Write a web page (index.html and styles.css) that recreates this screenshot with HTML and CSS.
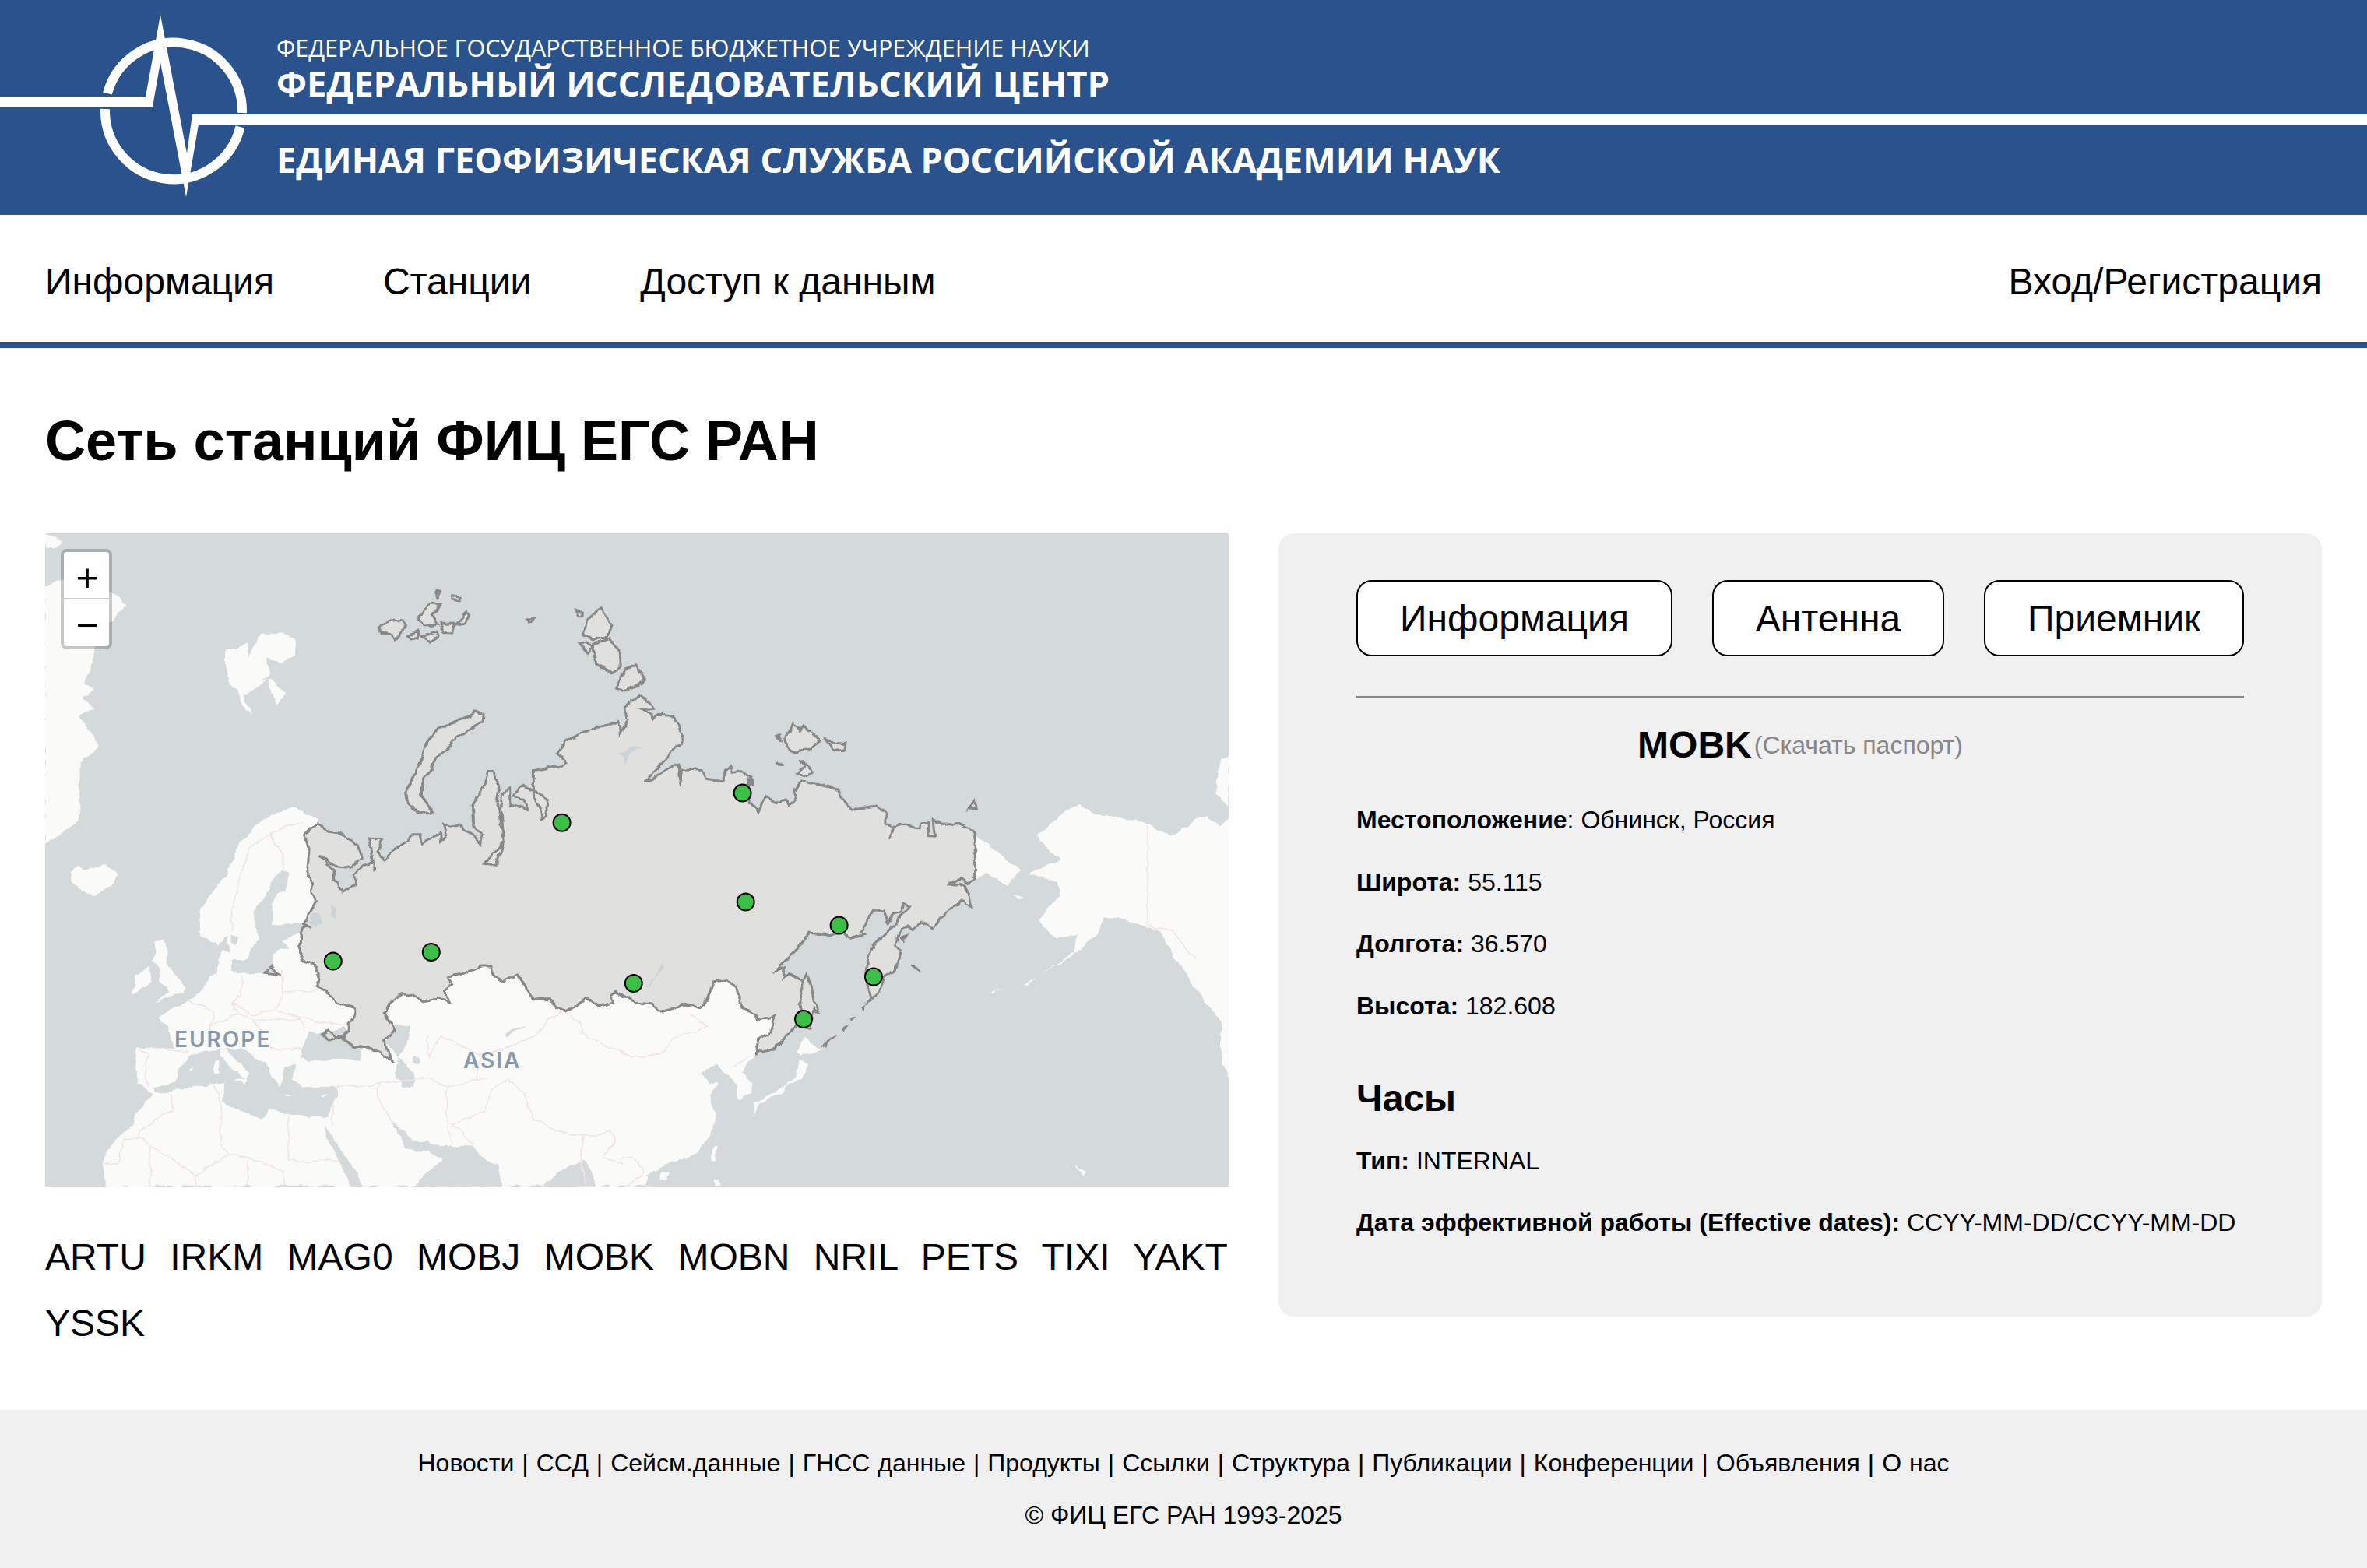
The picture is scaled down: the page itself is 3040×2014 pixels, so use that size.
FILE: index.html
```html
<!DOCTYPE html>
<html lang="ru">
<head>
    <meta charset="UTF-8">
    <meta name="viewport" content="width=device-width, initial-scale=1.0">
    <title>Сеть станций ФИЦ ЕГС РАН</title>
    <link rel="stylesheet" href="styles.css">
</head>
<body>
    <header class="banner">
        <svg class="banner-logo" width="3040" height="276" viewBox="0 0 3040 276">
            <path class="ring" d="M138 120A88 88 0 0 1 311 145"/>
            <path class="ring" d="M308.5 163A88 88 0 0 1 135 140"/>
            <polygon class="pulse" points="0,124 187,124 206,19 240,197 247,147 3040,147 3040,160 255,160 239,253 206,80 196,137 0,137"/>
        </svg>
        <div class="banner-top">
            <div class="banner-line1">ФЕДЕРАЛЬНОЕ ГОСУДАРСТВЕННОЕ БЮДЖЕТНОЕ УЧРЕЖДЕНИЕ НАУКИ</div>
            <div class="banner-line2">ФЕДЕРАЛЬНЫЙ ИССЛЕДОВАТЕЛЬСКИЙ ЦЕНТР</div>
        </div>
        <div class="banner-line3">ЕДИНАЯ ГЕОФИЗИЧЕСКАЯ СЛУЖБА РОССИЙСКОЙ АКАДЕМИИ НАУК</div>
    </header>

    <nav class="menubar">
        <div class="menu">
            <a class="menu-link">Информация</a>
            <a class="menu-link">Станции</a>
            <a class="menu-link">Доступ к данным</a>
        </div>
        <a class="menu-link">Вход/Регистрация</a>
    </nav>

    <main class="content">
        <h1 class="page-title">Сеть станций ФИЦ ЕГС РАН</h1>
        <div class="columns">
            <div class="left-col">
                <div class="map">
                    <svg class="map-svg" width="1520" height="839" viewBox="0 0 1520 839">
                        <defs>
                            <filter id="coast" filterUnits="userSpaceOnUse" x="0" y="0" width="1520" height="839">
                                <feTurbulence type="fractalNoise" baseFrequency="0.07" numOctaves="3" seed="4"/>
                                <feDisplacementMap in="SourceGraphic" scale="7" xChannelSelector="R" yChannelSelector="G"/>
                            </filter>
                        </defs>
                        <rect class="ocean" width="1520" height="839"/>
                        <g filter="url(#coast)">
                        <g transform="translate(-18,-15) scale(.5102,.3571)">
                            <!-- land -->
                            <polygon class="land" points="188,2391 180,2309 210,2224 258,2169 265,2124 305,2054 268,2019 262,1974 268,1892 360,1896 352,1860 345,1815 318,1779 385,1734 440,1674 450,1634 470,1624 480,1534 505,1554 500,1614 530,1629 585,1619 610,1604 607,1554 625,1534 650,1534 632,1509 675,1479 800,1500 1800,1600 1910,1750 1870,1899 1825,1914 1790,1974 1812,2024 1812,2059 1780,2079 1775,2024 1762,2004 1725,1949 1685,1989 1705,2024 1735,2019 1705,2064 1725,2134 1710,2204 1670,2279 1600,2314 1550,2354 1565,2391"/>
                            <polygon class="land" points="720,1070 660,1025 615,1050 580,1075 525,1160 490,1275 425,1390 425,1490 470,1525 495,1494 505,1574 545,1574 570,1494 560,1404 600,1324 640,1254 650,1264 605,1374 610,1454 680,1444 712,1400 712,1300 700,1130 720,1088"/>
                            <polygon class="land" points="35,42 60,55 80,75 60,95 35,95"/>
                            <polygon class="land" points="35,235 80,205 190,250 240,295 215,340 195,370 160,450 155,510 135,580 160,600 130,640 160,670 120,700 155,770 170,810 125,870 120,960 125,1020 118,1075 80,1120 35,1155"/>
                            <polygon class="land" points="488,460 520,455 545,435 550,490 575,405 625,400 670,425 665,480 630,510 590,490 605,550 580,570 600,565 640,620 620,660 600,610 595,565 555,610 530,620 558,705 530,660 520,610 500,580 488,520"/>
                            <polygon class="land" points="100,1260 120,1235 135,1250 190,1235 215,1270 210,1300 160,1345 120,1320 100,1290"/>
                            <polygon class="land" points="310,1510 335,1505 345,1535 340,1590 385,1670 385,1695 345,1712 308,1735 350,1690 320,1650 325,1610 305,1580 315,1550"/>
                            <polygon class="land" points="262,1635 300,1600 305,1655 255,1700"/>
                            <polygon class="land" points="2530,1135 2565,1090 2600,1045 2635,1015 2675,1050 2790,1075 2870,1130 2930,1075 2960,1055 2990,1100 3015,1065 3100,1065 3100,2009 3015,2009 2995,1924 2995,1804 2990,1784 2955,1729 2910,1634 2835,1469 2740,1429 2700,1424 2685,1484 2620,1564 2550,1619 2630,1544 2635,1484 2580,1499 2535,1434 2590,1344 2585,1294 2510,1265 2590,1215"/>
                            <polygon class="land" points="2995,850 3015,845 3015,1025 2980,980"/>
                            <polygon class="land" points="2375,1125 2435,1190 2490,1250 2455,1310 2410,1270 2375,1285"/>
                            <polygon class="land" points="2470,1340 2500,1355 2485,1358"/>
                            <polygon class="land" points="2500,1664 2530,1639 2510,1664"/>
                            <polygon class="land" points="2410,1694 2440,1680 2420,1698"/>
                            <polygon class="land" points="2620,2309 2630,2320 2655,2340 2650,2354 2640,2340"/>
                            <polygon class="land" points="1945,1850 1970,1884 1990,1894 1965,1914 1935,1919 1930,1904"/>
                            <polygon class="land" points="1935,1934 1955,1954 1940,2004 1900,2024 1890,2054 1830,2094 1820,2139 1815,2094 1870,2054 1925,1994 1930,1954"/>
                            <polygon class="land" points="1718,2250 1728,2248 1722,2300 1708,2300"/>
                            <polygon class="land" points="1585,2340 1605,2340 1600,2368 1585,2365"/>
                            <polygon class="land" points="1720,2364 1735,2364 1735,2391 1722,2391"/>
                            <!-- seas -->
                            <polygon class="water" points="310,2049 310,2036 365,2014 370,1969 400,1919 470,1896 530,1894 600,1964 612,2004 625,2034 640,1959 665,1954 660,2004 680,2034 770,2032 770,2064 750,2139 700,2142 650,2129 600,2114 580,2149 510,2109 480,2084 490,2019 465,2024 370,2039 345,2059"/>
                            <polygon class="water" points="680,1904 700,1834 745,1840 780,1858 830,1904 832,1940 780,1934 700,1939 680,1930"/>
                            <polygon class="water" points="755,1839 790,1814 795,1834 775,1850"/>
                            <polygon class="water" points="915,1814 955,1814 945,1884 925,1924 945,1954 970,2004 965,2029 935,2034 915,1984 925,1924 895,1874"/>
                            <polygon class="water" points="735,2169 755,2204 790,2284 840,2391 805,2391 780,2314 750,2224"/>
                            <polygon class="water" points="965,2391 1000,2334 1035,2299 1000,2264 975,2264 945,2254 925,2204 905,2159 925,2179 960,2224 990,2234 1000,2224 1005,2239 1060,2249 1110,2244 1135,2289 1175,2314 1185,2391"/>
                            <polygon class="water" points="1285,2391 1340,2329 1390,2294 1410,2334 1422,2391"/>
                            <polygon class="water" points="1547,2391 1555,2349 1568,2334 1568,2391"/>
                            <polygon class="water" points="960,1924 975,1930 975,1950 962,1945"/>
                            <polygon class="water" points="1190,1844 1210,1819 1250,1819 1215,1829 1200,1854"/>
                            <polygon class="water" points="505,1490 525,1495 515,1525 505,1515"/>
                            <polygon class="water" points="625,1250 650,1260 640,1330 605,1340 600,1310"/>
                            <!-- islands over the seas -->
                            <polygon class="land" points="478,1898 490,1900 525,1950 552,1985 540,2010 510,1975 478,1925"/>
                            <polygon class="land" points="462,1935 475,1935 475,1985 462,1985"/>
                            <polygon class="land" points="510,2008 545,2005 540,2025"/>
                            <polygon class="land" points="635,2060 660,2060 640,2066"/>
                            <polygon class="land" points="730,2065 750,2058 735,2072"/>
                            <polygon class="land" points="395,1970 410,1970 402,1980"/>
                            <!-- borders -->
                            <g class="borders">
                                <polyline points="685,1085 660,1085 600,1125 550,1170 520,1310 505,1400 505,1470"/>
                                <polyline points="600,1125 635,1200 630,1250"/>
                                <polyline points="395,1724 435,1744 460,1764 450,1824 460,1850 475,1880"/>
                                <polyline points="530,1634 530,1700 505,1730 520,1770 480,1800 450,1810"/>
                                <polyline points="630,1610 635,1690 620,1750 560,1775 505,1730"/>
                                <polyline points="640,1690 715,1690 745,1690"/>
                                <polyline points="620,1760 670,1780 730,1800 790,1810"/>
                                <polyline points="520,1770 560,1790 610,1790 680,1790 690,1840"/>
                                <polyline points="560,1790 590,1880 620,1900 670,1890 680,1900"/>
                                <polyline points="275,1900 295,1910 285,2000 300,2030"/>
                                <polyline points="330,1895 400,1910"/>
                                <polyline points="350,2060 355,2115 270,2190 270,2215 235,2220 215,2310 180,2310"/>
                                <polyline points="270,2215 415,2350 500,2275 540,2285 640,2340"/>
                                <polyline points="415,2350 415,2391"/>
                                <polyline points="545,2290 545,2391"/>
                                <polyline points="635,2340 635,2391"/>
                                <polyline points="460,2030 480,2105 475,2240 500,2275"/>
                                <polyline points="648,2135 648,2300 780,2300"/>
                                <polyline points="300,2245 300,2391"/>
                                <polyline points="765,2060 760,2130 755,2180"/>
                                <polyline points="880,2020 870,2040 880,2090 905,2150 930,2190"/>
                                <polyline points="770,2030 830,2030 880,2020 1000,2000 1050,2030 1045,2120 1060,2240"/>
                                <polyline points="1000,1850 1000,1930 1030,1850 1090,1890 1130,1920 1120,2010 1150,2000"/>
                                <polyline points="1345,1765 1380,1800 1385,1840 1440,1880 1490,1914 1535,1929 1590,1909 1620,1859 1705,1814 1675,1794 1660,1774"/>
                                <polyline points="1340,1765 1300,1790 1290,1820 1265,1855 1180,1900 1130,1920"/>
                                <polyline points="1200,2000 1240,2060 1265,2150 1340,2200 1420,2210 1460,2190 1470,2230 1440,2290 1490,2310"/>
                                <polyline points="1120,2010 1050,2030"/>
                                <polyline points="1200,2010 1160,2040 1140,2120 1060,2170 1115,2240"/>
                                <polyline points="1770,1960 1825,1910"/>
                                <polyline points="1480,2290 1520,2290 1545,2340 1500,2391"/>
                                <polyline points="1390,2210 1380,2300 1400,2391"/>
                                <polyline points="2810,1095 2810,1450 2835,1465 2870,1466 2930,1574"/>
                            </g>
                            <!-- Russia -->
                            <g class="russia">
                                <polygon points="720,1085 745,1110 790,1130 822,1165 832,1210 805,1245 770,1240 735,1210 725,1205 760,1250 762,1290 785,1330 820,1305 812,1275 835,1240 860,1228 862,1255 858,1210 850,1140 885,1145 870,1185 890,1218 905,1190 950,1145 960,1125 980,1125 985,1160 1000,1145 1030,1120 1032,1150 1045,1125 1040,1090 1075,1095 1110,1125 1130,1160 1140,1130 1115,1095 1112,1020 1130,980 1150,900 1165,900 1168,930 1180,950 1172,1010 1185,1060 1190,1150 1170,1238 1140,1228 1150,1215 1190,1150 1180,1050 1185,985 1205,960 1205,1020 1250,1035 1240,1000 1215,990 1235,950 1270,970 1300,1000 1295,1060 1285,1070 1280,1040 1265,985 1265,895 1340,878 1345,870 1325,835 1345,790 1400,750 1440,735 1480,718 1482,760 1500,715 1495,670 1530,625 1560,655 1565,670 1535,675 1560,690 1562,715 1575,695 1615,698 1625,722 1640,770 1635,800 1585,870 1545,938 1565,925 1595,895 1630,875 1635,945 1640,890 1690,895 1700,925 1740,935 1750,890 1760,880 1765,900 1790,895 1812,925 1812,948 1800,950 1810,1010 1832,1045 1850,985 1870,1012 1900,1000 1910,1022 1925,1005 1920,965 1940,935 1980,945 2035,965 2045,1000 2065,1037 2130,1025 2150,1045 2150,1090 2172,1098 2162,1145 2170,1100 2190,1090 2235,1100 2240,1085 2258,1085 2260,1133 2275,1135 2270,1075 2295,1087 2330,1085 2370,1110 2375,1125 2377,1285 2355,1302 2338,1285 2315,1302 2350,1310 2360,1340 2368,1385 2342,1365 2305,1405 2270,1462 2240,1440 2220,1465 2208,1450 2190,1465 2175,1525 2190,1545 2185,1574 2175,1614 2145,1640 2135,1694 2115,1719 2102,1634 2108,1554 2120,1524 2180,1442 2210,1382 2195,1372 2188,1409 2170,1414 2158,1444 2148,1396 2118,1402 2088,1474 2098,1486 2060,1499 2045,1479 2005,1486 1960,1479 1935,1524 1875,1614 1898,1604 1895,1644 1910,1624 1945,1659 1950,1694 1930,1804 1870,1899 1835,1909 1825,1916 1830,1859 1858,1849 1870,1779 1830,1796 1825,1774 1790,1749 1775,1674 1750,1649 1720,1654 1705,1714 1680,1749 1640,1732 1620,1754 1580,1759 1565,1739 1525,1734 1490,1704 1470,1689 1460,1709 1465,1729 1430,1744 1400,1716 1345,1761 1325,1749 1305,1719 1265,1719 1225,1629 1190,1654 1165,1634 1158,1599 1135,1599 1105,1616 1050,1636 1060,1664 1040,1689 1055,1724 1020,1714 985,1726 960,1701 935,1696 905,1729 890,1764 905,1804 915,1834 890,1864 908,1939 880,1909 850,1894 810,1891 780,1854 800,1829 800,1804 815,1779 815,1749 770,1729 745,1689 720,1674 725,1644 710,1589 685,1579 675,1534 680,1479 690,1444 705,1464 685,1444 720,1364 705,1334 705,1304 695,1254 700,1180 690,1130"/>
                                <!-- Novaya Zemlya, arctic islands, Sakhalin, Crimea, Kaliningrad -->
                                <polygon points="1120,680 1137,695 1135,720 1090,760 1060,790 1045,820 1020,850 1000,905 985,925 985,990 1010,1045 975,1050 945,1010 940,980 960,920 975,880 995,800 1020,750 1055,725 1105,700"/>
                                <polygon points="870,385 900,355 935,355 945,375 915,425 905,405 880,400"/>
                                <polygon points="975,355 990,320 1005,295 1030,295 1010,335 1025,370 990,375"/>
                                <polygon points="1035,365 1065,365 1060,400 1035,400"/>
                                <polygon points="1070,370 1095,325 1100,345 1090,365"/>
                                <polygon points="950,410 975,395 975,420 960,425"/>
                                <polygon points="985,410 1020,395 1025,410 1000,435"/>
                                <polygon points="1022,250 1030,252 1020,275"/>
                                <polygon points="1060,268 1078,272 1075,285 1060,280"/>
                                <polygon points="1372,322 1388,322 1388,338 1378,338"/>
                                <polygon points="1250,350 1265,348 1255,362"/>
                                <polygon points="1400,350 1435,310 1462,375 1445,420 1415,425 1390,405"/>
                                <polygon points="1415,440 1455,425 1480,460 1482,520 1465,545 1420,510"/>
                                <polygon points="1380,435 1415,445 1400,470"/>
                                <polygon points="1475,600 1495,530 1525,515 1545,565 1530,590 1490,610"/>
                                <polygon points="1895,790 1920,730 1935,755 1945,735 1988,785 1960,820 1920,830 1905,820"/>
                                <polygon points="1998,775 2020,795 2050,800 2048,820 2020,825"/>
                                <polygon points="1930,905 1950,875 1970,900 1955,915"/>
                                <polygon points="1935,860 1942,858 1945,875"/>
                                <polygon points="1875,860 1890,875 1880,870"/>
                                <polygon points="1878,770 1885,765 1886,785"/>
                                <polygon points="2360,1035 2375,1005 2380,1030"/>
                                <polygon points="1955,1629 1965,1674 1970,1724 1985,1774 1970,1754 1960,1824 1950,1824 1935,1704 1945,1654"/>
                                <polygon points="733,1844 750,1834 765,1852 790,1854 770,1854 750,1872"/>
                                <polygon points="590,1622 607,1601 622,1627"/>
                            </g>
                            <g class="kuril">
                                <polygon points="2100,1729 2112,1720 2100,1734"/>
                                <polygon points="2090,1745 2095,1740 2092,1752"/>
                                <polygon points="2065,1790 2075,1785 2068,1795"/>
                                <polygon points="2040,1825 2055,1815 2045,1835"/>
                                <polygon points="1990,1885 2000,1875 2025,1850 2010,1870 2000,1890"/>
                                <polygon points="2215,1595 2225,1600 2235,1620 2225,1610"/>
                                <polygon points="2190,1495 2205,1485 2195,1510"/>
                                <polygon points="1802,925 1812,925 1812,948 1800,950"/>
                            </g>
                            <!-- lakes inside Russia -->
                            <polygon class="lake" points="705,1410 725,1405 735,1450 715,1460 700,1440"/>
                            <polygon class="lake" points="752,1375 770,1400 768,1425 756,1410"/>
                            <polygon class="lake" points="1590,1590 1570,1640 1530,1690 1560,1660 1592,1610"/>
                            <polygon class="lake" points="1480,830 1515,810 1540,810 1510,835 1495,880 1490,850"/>
                        </g>
                        </g>
                        <text class="map-label" x="166" y="660">EUROPE</text>
                        <text class="map-label" x="537" y="687">ASIA</text>
                        <g class="station-dots">
                            <circle cx="369.8" cy="549.6" r="11"/>
                            <circle cx="495.8" cy="537.9" r="11"/>
                            <circle cx="663.6" cy="371.8" r="11"/>
                            <circle cx="755.8" cy="577.9" r="11"/>
                            <circle cx="895.6" cy="333.6" r="11"/>
                            <circle cx="899.7" cy="473.6" r="11"/>
                            <circle cx="974" cy="624" r="11"/>
                            <circle cx="1019.6" cy="503.6" r="11"/>
                            <circle cx="1063.9" cy="569.6" r="11"/>
                        </g>
                    </svg>
                    <div class="zoom-box">
                        <div class="zoom-btn">+</div>
                        <div class="zoom-btn">−</div>
                    </div>
                </div>
                <div class="station-list">
                    <a>ARTU</a> <a>IRKM</a> <a>MAG0</a> <a>MOBJ</a> <a>MOBK</a> <a>MOBN</a> <a>NRIL</a> <a>PETS</a> <a>TIXI</a> <a>YAKT</a> <a>YSSK</a>
                </div>
            </div>

            <section class="panel">
                <div class="tabs">
                    <button class="tab-button">Информация</button>
                    <button class="tab-button">Антенна</button>
                    <button class="tab-button">Приемник</button>
                </div>
                <hr class="panel-line">
                <div class="station-title"><b>MOBK</b><a class="passport">(Скачать паспорт)</a></div>
                <p class="row"><b>Местоположение</b>: Обнинск, Россия</p>
                <p class="row"><b>Широта:</b> 55.115</p>
                <p class="row"><b>Долгота:</b> 36.570</p>
                <p class="row"><b>Высота:</b> 182.608</p>
                <h3 class="panel-head">Часы</h3>
                <p class="row"><b>Тип:</b> INTERNAL</p>
                <p class="row"><b>Дата эффективной работы (Effective dates):</b> CCYY-MM-DD/CCYY-MM-DD</p>
            </section>
        </div>
    </main>

    <footer class="footer">
        <div class="footer-links">Новости | ССД | Сейсм.данные | ГНСС данные | Продукты | Ссылки | Структура | Публикации | Конференции | Объявления | О нас</div>
        <div class="footer-copy">© ФИЦ ЕГС РАН 1993-2025</div>
    </footer>
</body>
</html>
```

FILE: styles.css
```css
* {
    box-sizing: border-box;
}

body {
    font-family: "Liberation Sans", Arial, sans-serif;
    margin: 0;
    color: #000;
    background: #fff;
}

/* Banner */
.banner {
    position: relative;
    height: 276px;
    background: #2a528c;
    color: #fff;
    font-family: "Open Sans", sans-serif;
    padding: 41px 0 0 355px;
    overflow: hidden;
}

.banner-logo {
    position: absolute;
    left: 0;
    top: 0;
}

.ring {
    fill: none;
    stroke: #fff;
    stroke-width: 12;
}

.pulse {
    fill: #fff;
}

.banner-top,
.banner-line3 {
    position: relative;
}

.banner-line1 {
    font-size: 30.5px;
    line-height: 40px;
}

.banner-line2 {
    font-size: 45.4px;
    line-height: 44px;
    font-weight: 700;
    margin-top: 3px;
}

.banner-line3 {
    font-size: 45px;
    line-height: 60px;
    font-weight: 700;
    margin-top: 47px;
}

/* Menu */
.menubar {
    height: 171px;
    display: flex;
    justify-content: space-between;
    align-items: center;
    padding: 7px 58px 0;
    border-bottom: 8px solid #2a528c;
}

.menu {
    display: flex;
    gap: 140px;
}

.menu-link {
    font-size: 48px;
}

/* Content */
.content {
    padding: 0 58px 69px;
}

.page-title {
    font-size: 72px;
    line-height: 88px;
    margin: 75px 0 75px;
    font-weight: 700;
}

.columns {
    display: grid;
    grid-template-columns: 1520px 1340px;
    column-gap: 64px;
    align-items: start;
}

.map {
    position: relative;
    width: 1520px;
    height: 839px;
    overflow: hidden;
}

.map-svg {
    display: block;
}

.ocean,
.water {
    fill: #d4dadc;
}

.land {
    fill: #fafaf8;
}

.borders polyline {
    fill: none;
    stroke: #f1e4e5;
    stroke-width: 1.6;
    vector-effect: non-scaling-stroke;
}

.russia polygon {
    fill: #e0e0df;
    stroke: #888;
    stroke-width: 3;
    vector-effect: non-scaling-stroke;
}

.kuril polygon {
    fill: #888;
    stroke: #888;
    stroke-width: 1.5;
    vector-effect: non-scaling-stroke;
}

.lake {
    fill: #cdd4d8;
}

.map-label {
    font-family: "Inter", sans-serif;
    font-size: 28px;
    font-weight: 600;
    fill: #8a9aa9;
    letter-spacing: 2px;
}

.station-dots circle {
    fill: #3cbf47;
    stroke: #000;
    stroke-width: 2;
}

.zoom-box {
    position: absolute;
    left: 20px;
    top: 20px;
    width: 66px;
    border: 4px solid rgba(0, 0, 0, 0.2);
    border-radius: 8px;
    background-clip: padding-box;
}

.zoom-btn {
    height: 60px;
    background: #fff;
    text-align: center;
    font-family: "Liberation Sans", sans-serif;
    font-size: 50px;
    line-height: 66px;
    padding-left: 2px;
}

.zoom-btn:first-child {
    border-bottom: 2px solid #ccc;
    height: 61px;
    border-radius: 4px 4px 0 0;
}

.zoom-btn:last-child {
    border-radius: 0 0 4px 4px;
}

.station-list {
    font-size: 48px;
    line-height: 85px;
    text-align: justify;
    word-spacing: 8px;
    margin-top: 48px;
    padding-right: 2px;
}

/* Station panel */
.panel {
    height: 1006px;
    background: #f0f0f0;
    border-radius: 20px;
    padding: 60px 100px 0;
}

.tabs {
    display: flex;
    justify-content: space-between;
}

.tab-button {
    font-family: inherit;
    font-size: 48px;
    height: 98px;
    padding: 0 54px;
    background: #fff;
    color: #000;
    border: 2px solid #000;
    border-radius: 20px;
}

.panel-line {
    border: 0;
    height: 2px;
    background: #888;
    margin: 51px 0 0;
}

.station-title {
    display: flex;
    justify-content: center;
    align-items: center;
    font-size: 48px;
    line-height: 56px;
    margin-top: 33px;
}

.passport {
    font-size: 32px;
    color: #888;
    margin-left: 3px;
}

.row {
    font-size: 32px;
    line-height: 37px;
    margin: 0 0 42.5px;
}

.station-title + .row {
    margin-top: 50px;
}

.panel-head {
    font-size: 48px;
    line-height: 56px;
    margin: 72px 0 34px;
}

/* Footer */
.footer {
    height: 203px;
    background: #f0f0f0;
    text-align: center;
    font-size: 32px;
    line-height: 37px;
    padding-top: 50px;
}

.footer-links {
    word-spacing: 1.1px;
}

.footer-copy {
    margin-top: 30px;
}
```
